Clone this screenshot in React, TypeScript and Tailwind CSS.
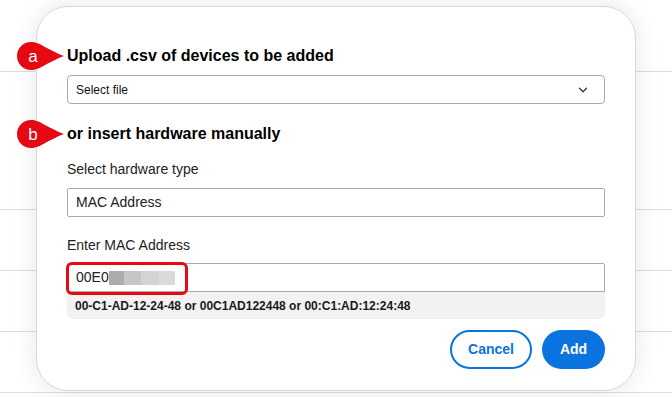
import { ChevronDown } from "lucide-react";

// little red teardrop pointer with a letter in it
function Marker({ label }: { label: string }) {
  return (
    <div className="absolute -left-[51px] top-1/2 h-[28px] w-[48px] -translate-y-1/2">
      <svg width="48" height="28" viewBox="0 0 48 28" className="absolute inset-0">
        <path d="M15 0 C24 0 30 7 48 14 C30 21 24 28 15 28 A14 14 0 0 1 15 0 Z" fill="#e50914" />
      </svg>
      <span className="absolute left-[3px] top-0 flex h-[28px] w-[28px] items-center justify-center text-[17px] leading-none text-white">
        {label}
      </span>
    </div>
  );
}

export default function App() {
  const rows = [72, 138, 61, 61, 61];

  return (
    <div className="relative h-[397px] w-[672px] overflow-hidden bg-white font-['Liberation_Sans',Arial,sans-serif] text-[#1a1a1a]">
      {/* page table behind the dialog */}
      <div className="flex flex-col">
        {rows.map((h, i) => (
          <div key={i} style={{ height: h }} className="border-b border-[#dedede]" />
        ))}
      </div>

      {/* dialog */}
      <div className="absolute left-[36px] top-[6px] flex h-[385px] w-[600px] flex-col rounded-[32px] border border-[#d9d9d9] bg-white px-[30px] pt-[39px] shadow-[0_0_24px_rgba(0,0,0,0.1)]">
        <div className="relative">
          <Marker label="a" />
          <h2 className="text-[16px] font-bold leading-[20px] text-black">Upload .csv of devices to be added</h2>
        </div>

        <div className="mt-[9px] flex h-[29px] items-center justify-between rounded-[4px] border border-[#a3acb1] pl-[8px] pr-[14px]">
          <span className="text-[12px] text-[#111]">Select file</span>
          <ChevronDown size={14} strokeWidth={2.25} className="text-[#333]" />
        </div>

        <div className="relative mt-[20px]">
          <Marker label="b" />
          <h2 className="text-[16px] font-bold leading-[20px] text-black">or insert hardware manually</h2>
        </div>

        <label className="mt-[17px] text-[14px] leading-[16px] text-[#222]">Select hardware type</label>
        <div className="mt-[11px] flex h-[29px] items-center rounded-[2px] border border-[#a3acb1] px-[8px] text-[14px] text-[#222]">
          MAC Address
        </div>

        <label className="mt-[20px] text-[14px] leading-[16px] text-[#222]">Enter MAC Address</label>
        <div className="relative mt-[10px] flex h-[29px] items-center rounded-t-[2px] border border-[#a3acb1] px-[8px] text-[14px] text-[#222]">
          <span>00E0</span>
          <span className="flex h-[14px]">
            <span className="w-[15px] bg-[#acacac]" />
            <span className="w-[17px] bg-[#c6c6c6]" />
            <span className="w-[18px] bg-[#d3d3d3]" />
            <span className="w-[16px] bg-[#dadada]" />
          </span>
          <div className="absolute -left-[2px] -top-[2px] h-[33px] w-[122px] rounded-[6px] border-[3px] border-[#e50914]" />
        </div>
        <div className="flex h-[27px] items-center rounded-b-[6px] bg-[#f2f2f2] px-[8px] text-[12px] font-bold text-[#1a1a1a]">
          00-C1-AD-12-24-48 or 00C1AD122448 or 00:C1:AD:12:24:48
        </div>

        <div className="mt-[11px] flex justify-end gap-[10px]">
          <button className="h-[39px] w-[82px] rounded-full border-2 border-[#0a73e0] text-[14px] font-bold text-[#0a73e0]">
            Cancel
          </button>
          <button className="h-[39px] w-[63px] rounded-full bg-[#0a73e0] text-[14px] font-bold text-white">
            Add
          </button>
        </div>
      </div>
    </div>
  );
}
